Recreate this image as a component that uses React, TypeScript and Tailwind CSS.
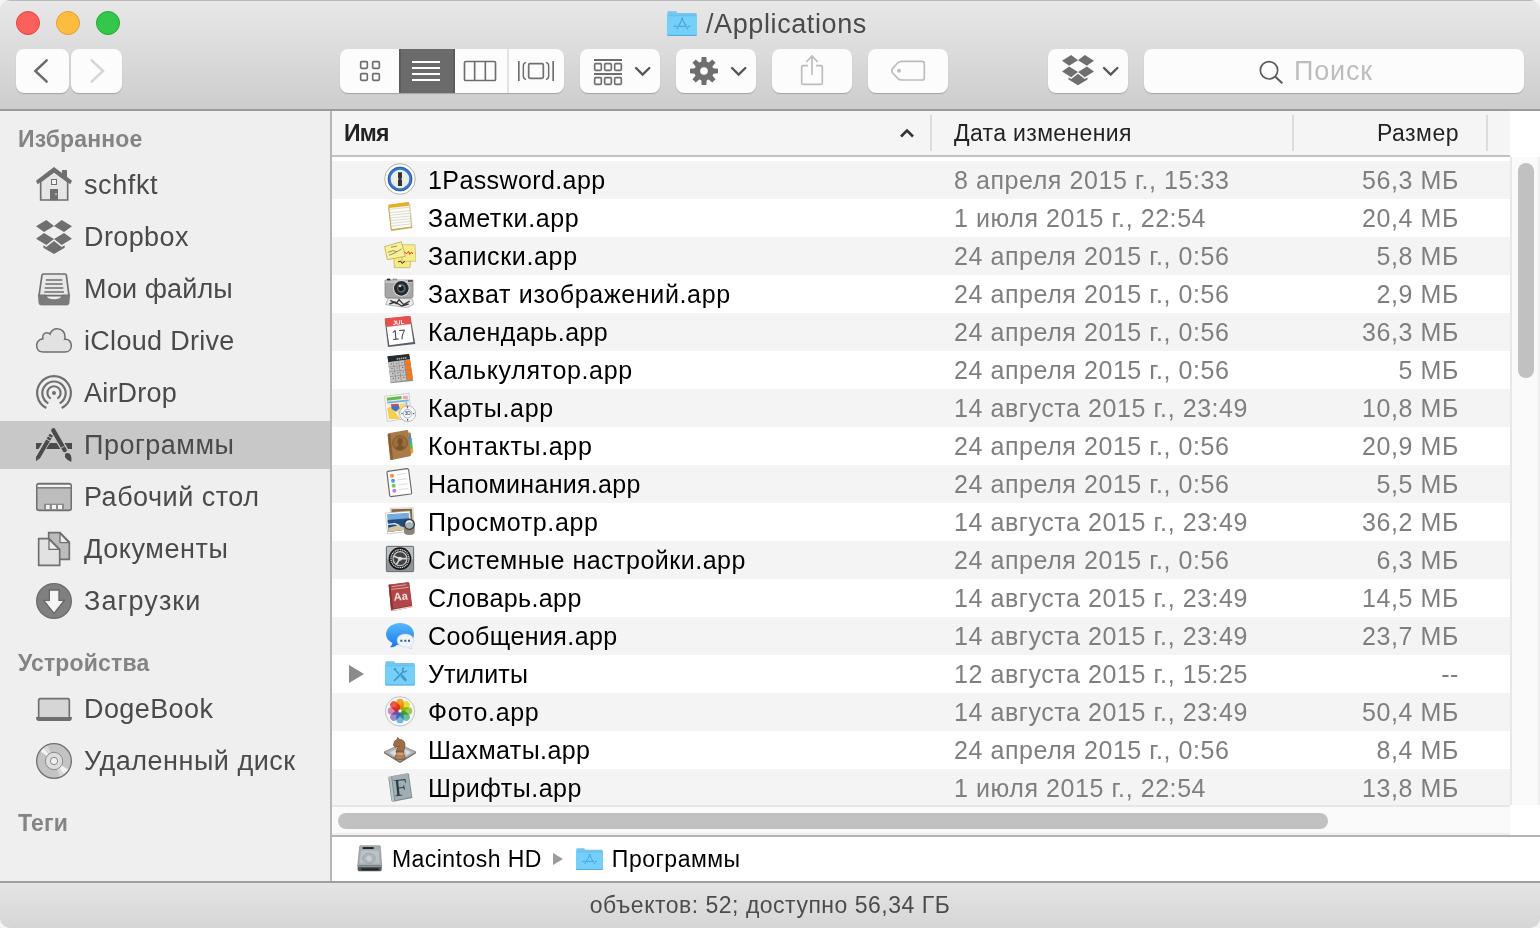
import type { ReactNode } from 'react';

function Art({ box, className, children }: { box: string; className: string; children: ReactNode }) {
  return (
    <svg viewBox={box} className={`block shrink-0 ${className}`} fill="none" preserveAspectRatio="none">
      {children}
    </svg>
  );
}

/* ---------- folder glyph shared by title, list and path bar ---------- */

function FolderShape() {
  return (
    <>
      <path d="M1 8 Q1 4 4 4 H26 Q28 4 29 6 L31 9 H86 Q89 9 89 12 V72 H1Z" fill="#74c6ee" />
      <path d="M0 17 H90 V73 Q90 76 87 76 H3 Q0 76 0 73Z" fill="#74d0f9" />
      <path d="M0 17 H90" stroke="#5bb9e8" strokeWidth="2" />
      <path d="M1 75 H89" stroke="#4fa9d8" strokeWidth="3" />
    </>
  );
}

function AppsFolder({ className }: { className: string }) {
  return (
    <Art box="0 0 90 80" className={className}>
      <FolderShape />
      <g stroke="#3f9fdc" strokeWidth="3">
        <path d="M48 24 L29 57" />
        <path d="M43 24 L63 57" />
        <path d="M20 48 H31 M37 48 H56 M63 48 H70" />
      </g>
    </Art>
  );
}

/* ---------- sidebar icons ---------- */

const G = '#6f6f6f';

const HouseIcon = () => (
  <Art box="108 36 108 108" className="size-9">
    <path d="M122 80 L162 50 L203 80 V135 H122Z" fill="#e6e6e6" stroke={G} strokeWidth="5" />
    <path d="M162 36 L186 54 V45 H201 V65 L216 77 L211 88 L162 52 L113 88 L108 77Z" fill={G} />
    <rect x="154.500" y="73.500" width="15" height="15" fill="#f4f4f4" stroke={G} strokeWidth="3" />
    <path d="M150 102 H174 V136 H150Z" fill={G} />
    <path d="M168 114 V121" stroke="#e6e6e6" strokeWidth="3" />
  </Art>
);

function BoxLogo() {
  return (
    <path
      fill={G}
      d="M139 195 L162 213 L132 231 L108 214Z M185 195 L216 214 L192 231 L162 213Z M132 234 L162 252 L139 270 L108 251Z M192 234 L216 251 L185 270 L162 252Z M162 258 L185 276 L194 271 V278 L162 297 L130 278 V271 L139 276Z"
    />
  );
}

const DropboxIcon = () => (
  <Art box="108 192 108 108" className="size-9">
    <BoxLogo />
  </Art>
);

const TrayIcon = () => (
  <Art box="108 348 108 108" className="size-9">
    <path d="M130 357 H195 Q198 357 199 360 L207 422 H117 L126 360 Q127 357 130 357Z" fill="#e8e8e8" stroke={G} strokeWidth="5" />
    <path d="M138 375 H187 M136 387 H188 M134 399 H190 M133 411 H192" stroke={G} strokeWidth="4.500" />
    <path d="M115 420 H137 Q141 434 162 434 Q183 434 187 420 H209 L207 445 Q206 450 201 450 H123 Q118 450 117 445Z" fill="#7b7b7b" stroke={G} strokeWidth="2" />
  </Art>
);

const CloudIcon = () => (
  <Art box="108 504 108 108" className="size-9">
    <path
      d="M130 591 C117 591 110 583 110 572 C110 560 118 553 129 551 C126 541 132 533 141 533 C145 533 148 534 150 537 C154 526 162 521 171 521 C186 521 196 532 195 547 C195 549 195 551 194 553 C206 551 214 561 214 572 C214 583 206 591 195 591Z"
      fill="#e2e2e2"
      stroke={G}
      strokeWidth="4.500"
    />
  </Art>
);

const AirDropIcon = () => (
  <Art box="108 660 108 108" className="size-9">
    <circle cx="162" cy="714" r="6" fill={G} />
    <g stroke={G} strokeWidth="6.500">
      <path d="M139 759 A50.500 50.500 0 1 1 185 759" />
      <path d="M145 745 A35 35 0 1 1 179 745" />
      <path d="M152 731 A20 20 0 1 1 172 731" />
    </g>
  </Art>
);

const ProgramsIcon = () => (
  <Art box="108 36 108 108" className="size-9">
    <path d="M108 84 H216 V102 H108Z" fill="#4a4a4a" />
    <path d="M157 52 L110 131 M160 48 L204 121" stroke="#c8c8c8" strokeWidth="20" />
    <path d="M154 59 L114 128" stroke="#4a4a4a" strokeWidth="12" />
    <path d="M108 124 L119 130 L108 139Z" fill="#4a4a4a" />
    <path d="M160 46 L194 105" stroke="#4a4a4a" strokeWidth="13" strokeLinecap="round" />
    <path d="M195 117 Q206 110 212 120 Q216 128 214 141 Q200 135 195 127Z" fill="#4a4a4a" />
    <path d="M142 62 L160 72 M137 71 L153 80" stroke="#c8c8c8" strokeWidth="3" />
    <path d="M182 100 L199 90" stroke="#c8c8c8" strokeWidth="2.500" />
  </Art>
);

const DesktopIcon = () => (
  <Art box="108 192 108 108" className="size-9">
    <rect x="110" y="206" width="104" height="80" rx="7" fill="#bdbdbd" stroke={G} strokeWidth="5" />
    <path d="M113 210 H211 V216 H113Z" fill="#f4f4f4" />
    <path d="M112 218.500 H212" stroke={G} strokeWidth="4" />
    <path d="M132 266 H192 V284 H132Z" fill="#8b8b8b" />
    <path d="M138 270 H149 V282 H138Z M156 270 H168 V282 H156Z M174 270 H186 V282 H174Z" fill="#f4f4f4" />
  </Art>
);

const DocumentsIcon = () => (
  <Art box="108 348 108 108" className="size-9">
    <path d="M146 353 H180 L208 381 V433 H146Z" fill="#bcbcbc" stroke={G} strokeWidth="5" />
    <path d="M180 355 V383 H207Z" fill="#ececec" stroke={G} strokeWidth="4" />
    <path d="M116 371 H147 L179 403 V451 H116Z" fill="#e2e2e2" stroke={G} strokeWidth="5" />
    <path d="M147 373 V403 H177Z" fill="#efefef" stroke={G} strokeWidth="4" />
  </Art>
);

const DownloadsIcon = () => (
  <Art box="108 504 108 108" className="size-9">
    <circle cx="162" cy="558" r="52" fill="#808080" stroke="#6c6c6c" strokeWidth="4" />
    <path d="M148 525 H177 V556 H193 L162 595 L131 556 H148Z" fill="#f5f5f5" stroke="#676767" strokeWidth="4" />
  </Art>
);

const LaptopIcon = () => (
  <Art box="108 153 108 108" className="size-9">
    <rect x="116" y="176" width="92" height="60" rx="5" fill="#d6d6d6" stroke={G} strokeWidth="5" />
    <path d="M108 231 H216 Q216 243 208 243 H116 Q108 243 108 231Z" fill={G} />
  </Art>
);

const DiscIcon = () => (
  <Art box="108 309 108 108" className="size-9">
    <circle cx="162" cy="363" r="52" fill="#c3c3c3" />
    <path d="M162 363 L120 333 L130 323Z M162 363 L206 389 L192 403Z" fill="#f3f3f3" />
    <path d="M162 363 L130 323 L143 315Z M162 363 L192 403 L180 411Z" fill="#d9d9d9" />
    <circle cx="162" cy="363" r="52" stroke={G} strokeWidth="4" />
    <circle cx="162" cy="363" r="26" fill="#dedede" stroke="#8a8a8a" strokeWidth="3" />
    <circle cx="162" cy="363" r="11" fill="#f0f0f0" stroke="#8a8a8a" strokeWidth="3" />
  </Art>
);

/* ---------- list icons ---------- */

const OnePassword = () => (
  <Art box="147 24 96 96" className="size-8">
    <circle cx="195" cy="72" r="46" fill="#fdfdfd" stroke="#a5a5a5" strokeWidth="2.500" />
    <circle cx="195" cy="72" r="32" fill="#ececec" stroke="#2f7ad8" strokeWidth="8" />
    <circle cx="195" cy="72" r="36" stroke="#12366b" strokeWidth="2" />
    <path d="M189 52 H201 V68 L199 72 L201 76 V93 H189 V76 L191 72 L189 68Z" fill="#333" />
  </Art>
);

const Notes = () => (
  <Art box="147 138 96 96" className="size-8">
    <path d="M162 153 L226 145 L233 220 L169 229Z" fill="#8f8f8f" opacity=".35" />
    <path d="M160 150 L221 141 L231 218 L168 227Z" fill="#d8b44e" />
    <path d="M162 156 L222 149 L228 215 L169 223Z" fill="#fcfcf6" />
    <path d="M160 149 L221 141 L223 152 L161 159Z" fill="#e6af24" />
    <path d="M164 163 L222 157" stroke="#9a9a8a" strokeWidth="2" strokeDasharray="3 3" />
    <path d="M165 173 L223 167 M166 181 L224 175 M167 189 L225 183 M168 197 L226 191 M168 205 L226 199 M169 213 L227 207" stroke="#c9c9c9" strokeWidth="2" />
    <path d="M161 158 L169 225 L231 216" stroke="#c9a94f" strokeWidth="3" />
  </Art>
);

const Stickies = () => (
  <Art box="147 252 96 96" className="size-8">
    <path d="M176 304 H228 L225 338 H178Z" fill="#f6ea81" stroke="#b5aa60" strokeWidth="2" />
    <path d="M196 269 H240 L243 319 H202Z" fill="#f7ec86" stroke="#bdb268" strokeWidth="2" />
    <path d="M149 275 L199 260 L211 304 L157 314Z" fill="#faf09a" stroke="#a89c4a" strokeWidth="2" />
    <path d="M168 277 L186 273 M159 292 L174 287 L186 290 L200 282 M162 301 L184 292" stroke="#63613c" strokeWidth="2" />
    <path d="M208 291 L215 296 L221 289 L224 298 L230 291 L233 297" stroke="#d33" strokeWidth="3" />
    <path d="M189 321 L197 318 L201 325 L210 319" stroke="#333" strokeWidth="3" />
  </Art>
);

const ImageCapture = () => (
  <Art box="147 366 96 96" className="size-8">
    <path d="M160 428 L232 432 L236 448 L217 458 L152 449Z" fill="#e9e9e9" stroke="#999" strokeWidth="2" />
    <path d="M166 436 L184 446 L192 434 L206 449 L224 438 M163 447 L180 441 L200 453 L221 447" stroke="#3a3a3a" strokeWidth="4" />
    <path d="M150 375 H174 V372 H185 V375 H234 V424 Q234 429 228 429 H158 Q150 429 150 423Z" fill="#a7a7a7" stroke="#777" strokeWidth="2" />
    <path d="M151 376 H233 V384 H151Z" fill="#c4c4c4" />
    <rect x="156" y="371" width="10" height="5" fill="#222" />
    <rect x="219" y="375" width="14" height="6" fill="#555" />
    <circle cx="199" cy="400" r="25" fill="#d8d8d8" />
    <circle cx="199" cy="400" r="22" fill="#292929" />
    <circle cx="199" cy="400" r="13" fill="#53606f" />
    <circle cx="198" cy="400" r="8" fill="#151c28" />
    <circle cx="195" cy="393" r="4" fill="#c5d2e4" />
  </Art>
);

const CalendarIcon = () => (
  <Art box="147 480 96 96" className="size-8">
    <path d="M149 491 L226 483 L241 567 L159 576Z" fill="#5a6068" />
    <path d="M152 494 L224 485 L235 561 L163 571Z" fill="#fff" />
    <path d="M150 492 Q150 490 153 490 L222 483 Q225 483 226 486 L229 507 L153 516Z" fill="#e8504e" />
    <text x="174" y="510" transform="rotate(-6 174 510)" fontSize="18" fontWeight="700" fill="#fff" fontFamily="Liberation Sans, sans-serif">JUL</text>
    <text x="172" y="555" transform="rotate(-5 172 555)" fontSize="41" textLength="42" lengthAdjust="spacingAndGlyphs" fill="#444" fontFamily="Liberation Sans, sans-serif">17</text>
  </Art>
);

const CalculatorIcon = () => (
  <Art box="147 24 96 96" className="size-8">
    <path d="M158 35 L223 27 L234 108 L167 115Z" fill="#8f8f8f" />
    <path d="M157 34 L222 27 L225 42 L160 52Z" fill="#252b30" />
    <path d="M185 42 L216 38" stroke="#a9b8ba" strokeWidth="5" strokeDasharray="4 2" />
    <path d="M160 52 L207 46 L215 106 L167 112Z" fill="#c6c6c6" />
    <path d="M208 46 L225 43 L234 102 L216 105Z" fill="#f4791f" />
    <path d="M161 66 L228 58 M163 80 L230 73 M165 95 L232 87 M175 50 L183 110 M191 48 L199 108 M207 46 L216 106" stroke="#8a837e" strokeWidth="2" />
    <path d="M167 57 L205 53 M169 71 L207 67 M171 86 L209 81 M173 101 L211 97" stroke="#666" strokeWidth="3" strokeDasharray="4 12" />
  </Art>
);

const MapsIcon = () => (
  <Art box="147 138 96 96" className="size-8">
    <path d="M149 154 L222 145 L229 219 L157 229Z" fill="#fbfbfb" stroke="#b9b9b9" strokeWidth="2" />
    <path d="M155 158 L220 150 L226 214 L161 223Z" fill="#f2efe2" />
    <path d="M155 158 L199 153 L200 162 L156 167Z" fill="#62bb46" />
    <path d="M204 153 L218 152 L219 162 L204 162Z" fill="#f0a3b1" />
    <path d="M156 173 L221 166" stroke="#6db2ec" strokeWidth="5" />
    <path d="M213 167 L216 195" stroke="#8cc6f1" strokeWidth="6" />
    <path d="M157 189 L168 185 L196 222 H162Z" fill="#f7cf4c" />
    <path d="M196 176 L212 173 V196 L198 214 L187 201Z" fill="#f7dd78" />
    <path d="M168 179 L190 177 L194 190 L183 200 L170 192Z" fill="#3c76c8" />
    <path d="M167 178 L190 176 L191 182 L169 184Z" fill="#dd4a4a" />
    <circle cx="218" cy="206" r="24" fill="#fafafa" stroke="#9b9b9b" strokeWidth="2" />
    <circle cx="218" cy="206" r="13" stroke="#7fb4cf" strokeWidth="2.500" />
    <text x="209" y="211" fontSize="14" fill="#333" fontFamily="Liberation Sans, sans-serif">3D</text>
    <path d="M214 184 H221 L217.500 191Z" fill="#e22" />
    <path d="M199 206 H203 M234 206 H238 M218 222 V227" stroke="#234" strokeWidth="3" />
  </Art>
);

const ContactsIcon = () => (
  <Art box="147 252 96 96" className="size-8">
    <path d="M220 262 L227 264 L229 282 L221 284Z" fill="#77808a" />
    <path d="M220 281 L230 279 L232 296 L222 300Z" fill="#40a6dc" />
    <path d="M222 297 L232 295 L234 311 L224 315Z" fill="#61bd56" />
    <path d="M224 313 L234 309 L235 322 L226 330Z" fill="#ee9a35" />
    <path d="M158 269 Q157 266 161 265 L215 255 Q219 255 220 259 L228 330 Q228 333 225 334 L170 345 Q166 345 165 341Z" fill="#a97b48" />
    <path d="M158 269 L166 266 L174 343 L167 345Z" fill="#8a5e2e" />
    <circle cx="195" cy="294" r="22" fill="#9c6f3b" stroke="#79542a" strokeWidth="2.500" />
    <path d="M195 279 Q204 279 203 290 Q202 297 199 299 Q200 304 210 306 Q204 315 195 315 Q184 314 180 308 Q191 305 191 299 Q187 295 187 289 Q187 280 195 279Z" fill="#79542a" />
  </Art>
);

const RemindersIcon = () => (
  <Art box="147 366 96 96" className="size-8">
    <path d="M158 379 L216 371 Q220 371 221 375 L230 443 Q230 446 227 447 L168 455 Q165 455 164 451 L156 383 Q156 380 158 379Z" fill="#fdfdfd" stroke="#6a6a6a" strokeWidth="3.500" />
    <path d="M186 389 L214 385 M187 405 L216 401 M190 420 L218 416 M192 434 L220 430" stroke="#ccc" strokeWidth="2" />
    <circle cx="171" cy="392" r="6" fill="#f8893d" />
    <circle cx="174" cy="407" r="6" fill="#3e9eea" />
    <circle cx="176" cy="422" r="6" fill="#68cf57" />
    <circle cx="178" cy="437" r="6" fill="#c77be3" />
  </Art>
);

const PreviewIcon = () => (
  <Art box="147 480 96 96" className="size-8">
    <path d="M165 490 L234 488 L237 550 H168Z" fill="#fafafa" stroke="#bbb" strokeWidth="2" />
    <path d="M169 493 L231 491 L233 530 H170Z" fill="#866637" />
    <path d="M151 504 L224 498 L230 558 L158 567Z" fill="#fff" stroke="#b7b7b7" strokeWidth="2" />
    <path d="M156 508 L221 503 L226 552 L161 561Z" fill="#73abe1" />
    <path d="M158 525 L223 520 L226 552 L161 561Z" fill="#204c80" />
    <path d="M160 548 L190 541 L210 548 L226 540 V552 L161 561Z" fill="#d8c39d" />
    <path d="M159 538 L180 536 L193 542" stroke="#e6eef4" strokeWidth="4" />
    <path d="M207 538 H239 V561 Q239 570 223 570 Q207 570 207 561Z" fill="#8b847b" />
    <circle cx="223" cy="538" r="15" fill="#a9b3bc" stroke="#3a3633" strokeWidth="4" />
    <path d="M214 534 Q221 525 231 532" stroke="#eef" strokeWidth="4" />
  </Art>
);

const SettingsIcon = () => (
  <Art box="147 24 96 96" className="size-8">
    <rect x="153" y="33" width="84" height="78" rx="4" fill="#8d959a" />
    <rect x="155" y="35" width="80" height="38" fill="#b7c1c6" />
    <rect x="154" y="34" width="82" height="76" rx="4" stroke="#6b7175" strokeWidth="3" />
    <circle cx="195" cy="71" r="34" fill="#151515" />
    <circle cx="195" cy="71" r="27" stroke="#e0e0e0" strokeWidth="4" strokeDasharray="3.500 2" />
    <circle cx="195" cy="71" r="21" fill="#424242" stroke="#c4c4c4" strokeWidth="4" />
    <path d="M195 71 L176 63 M195 71 H216 M195 71 L184 89" stroke="#d4d4d4" strokeWidth="5" />
    <circle cx="195" cy="71" r="6" fill="#ddd" />
  </Art>
);

const DictionaryIcon = () => (
  <Art box="147 138 96 96" className="size-8">
    <path d="M161 149 L219 142 Q222 142 223 145 L232 216 L173 228 Q169 228 168 224Z" fill="#9c3336" />
    <path d="M171 224 L231 213 L231 217 L173 228Z" fill="#e6ddd5" />
    <path d="M161 149 L221 142 L230 211 L168 222Z" fill="#b0484b" />
    <path d="M161 150 L166 149 L175 222 L169 224Z" fill="#8b2f33" />
    <path d="M170 155 L214 149 M169 163 L221 157" stroke="#d9a3a3" strokeWidth="3" />
    <text x="177" y="197" transform="rotate(-5 177 197)" fontSize="33" textLength="42" lengthAdjust="spacingAndGlyphs" fill="#f6e4e2" fontWeight="700" fontFamily="Liberation Sans, sans-serif">Aa</text>
  </Art>
);

const MessagesIcon = () => (
  <Art box="147 252 96 96" className="size-8">
    <defs>
      <linearGradient id="bubble" x1="0" y1="0" x2="0" y2="1">
        <stop offset="0" stopColor="#58b9fb" />
        <stop offset="1" stopColor="#1a79ee" />
      </linearGradient>
    </defs>
    <path d="M195 264 C220 264 237 279 237 298 C237 317 219 330 195 330 L186 329 Q179 337 165 337 Q172 331 172 324 C160 318 153 309 153 298 C153 279 171 264 195 264Z" fill="url(#bubble)" />
    <path d="M211 297 C226 297 236 305 236 317 C236 324 232 329 227 332 Q227 337 231 341 Q222 341 217 336 C199 338 186 329 186 316 C186 305 197 297 211 297Z" fill="#eff5fb" stroke="#a8c5df" strokeWidth="1.500" />
    <path d="M196 317 H202 M208 317 H214 M219 317 H225" stroke="#34597f" strokeWidth="6" />
  </Art>
);

const UtilitiesIcon = () => (
  <Art box="147 366 96 96" className="size-8">
    <g transform="translate(150 375)">
      <FolderShape />
    </g>
    <g stroke="#3c97ca" strokeWidth="4">
      <path d="M180 404 L192 417 M198 423 L211 436" />
      <path d="M177 438 L205 409" strokeWidth="5" />
      <path d="M207 398 Q200 403 204 409 Q210 414 215 406" />
    </g>
    <path d="M175 401 L180 398 L185 403 L180 408Z M197 423 L202 418 L216 434 L211 440Z" fill="#3c97ca" />
  </Art>
);

const petals = [
  { a: 0, c: '#fba32c' },
  { a: 45, c: '#ece437' },
  { a: 90, c: '#a5d054' },
  { a: 135, c: '#6cc7a0' },
  { a: 180, c: '#79b8ea' },
  { a: 225, c: '#9c8fd4' },
  { a: 270, c: '#e08abf' },
  { a: 315, c: '#f25a45' },
];

const PhotosIcon = () => (
  <Art box="147 480 96 96" className="size-8">
    <circle cx="195" cy="529" r="44" fill="#f8f8f8" stroke="#b5b5b5" strokeWidth="2.500" />
    {petals.map((p) => (
      <rect key={p.a} x="184" y="491" width="22" height="33" rx="11" fill={p.c} className="mix-blend-multiply" transform={`rotate(${p.a} 195 528)`} />
    ))}
  </Art>
);

const ChessIcon = () => (
  <Art box="147 129 96 96" className="size-8">
    <path d="M147 186 L195 164 L243 186 L195 215Z" fill="#b5b5b5" stroke="#6c6c6c" strokeWidth="2" />
    <path d="M147 187 L195 215 L243 187 V190 L195 219 L147 190Z" fill="#5f5f5f" />
    <path d="M164 187 L195 174 V200 L180 199Z M210 178 L228 187 L212 197Z" fill="#dcdcdc" />
    <path d="M188 142 L192 148 Q211 149 210 167 Q209 177 203 186 H183 Q184 177 193 168 L181 172 L175 166 L179 153 L186 149Z" fill="#9d6d45" stroke="#6b4525" strokeWidth="2" />
    <path d="M185 184 H205 L206 193 L211 202 Q211 209 195 209 Q179 209 179 202 L184 193Z" fill="#b27d52" stroke="#6b4525" strokeWidth="2" />
    <path d="M184 192 H206" stroke="#e3bd93" strokeWidth="3" />
  </Art>
);

const FontsIcon = () => (
  <Art box="147 243 96 96" className="size-8">
    <path d="M162 260 L218 250 Q221 250 222 253 L232 324 L174 335 Q170 335 169 331 L160 263Z" fill="#7e8b91" />
    <path d="M162 259 L168 258 L178 332 L171 334Z" fill="#b9c5ca" />
    <path d="M171 258 L219 250 L229 321 L180 331Z" fill="#a0afb5" />
    <text x="179" y="319" transform="rotate(-6 179 319)" fontSize="74" textLength="40" lengthAdjust="spacingAndGlyphs" fill="#2f383d" fontFamily="Liberation Serif, serif">F</text>
  </Art>
);

/* ---------- data ---------- */

type Row = { name: string; date: string; size: string; icon: ReactNode; folder?: boolean; track?: string };

const rows: Row[] = [
  { name: '1Password.app', date: '8 апреля 2015 г., 15:33', size: '56,3 МБ', icon: <OnePassword />, track: 'tracking-[0.4px]' },
  { name: 'Заметки.app', date: '1 июля 2015 г., 22:54', size: '20,4 МБ', icon: <Notes /> },
  { name: 'Записки.app', date: '24 апреля 2015 г., 0:56', size: '5,8 МБ', icon: <Stickies /> },
  { name: 'Захват изображений.app', date: '24 апреля 2015 г., 0:56', size: '2,9 МБ', icon: <ImageCapture /> },
  { name: 'Календарь.app', date: '24 апреля 2015 г., 0:56', size: '36,3 МБ', icon: <CalendarIcon />, track: 'tracking-[0.4px]' },
  { name: 'Калькулятор.app', date: '24 апреля 2015 г., 0:56', size: '5 МБ', icon: <CalculatorIcon /> },
  { name: 'Карты.app', date: '14 августа 2015 г., 23:49', size: '10,8 МБ', icon: <MapsIcon /> },
  { name: 'Контакты.app', date: '24 апреля 2015 г., 0:56', size: '20,9 МБ', icon: <ContactsIcon /> },
  { name: 'Напоминания.app', date: '24 апреля 2015 г., 0:56', size: '5,5 МБ', icon: <RemindersIcon />, track: 'tracking-[0.3px]' },
  { name: 'Просмотр.app', date: '14 августа 2015 г., 23:49', size: '36,2 МБ', icon: <PreviewIcon /> },
  { name: 'Системные настройки.app', date: '24 апреля 2015 г., 0:56', size: '6,3 МБ', icon: <SettingsIcon />, track: 'tracking-[0.5px]' },
  { name: 'Словарь.app', date: '14 августа 2015 г., 23:49', size: '14,5 МБ', icon: <DictionaryIcon />, track: 'tracking-[0.4px]' },
  { name: 'Сообщения.app', date: '14 августа 2015 г., 23:49', size: '23,7 МБ', icon: <MessagesIcon />, track: 'tracking-[0.4px]' },
  { name: 'Утилиты', date: '12 августа 2015 г., 15:25', size: '--', icon: <UtilitiesIcon />, folder: true, track: 'tracking-[0.1px]' },
  { name: 'Фото.app', date: '14 августа 2015 г., 23:49', size: '50,4 МБ', icon: <PhotosIcon /> },
  { name: 'Шахматы.app', date: '24 апреля 2015 г., 0:56', size: '8,4 МБ', icon: <ChessIcon />, track: 'tracking-[0.4px]' },
  { name: 'Шрифты.app', date: '1 июля 2015 г., 22:54', size: '13,8 МБ', icon: <FontsIcon />, track: 'tracking-[0.5px]' },
];

type Place = { label: string; icon: ReactNode; track: string; active?: boolean };

const favourites: Place[] = [
  { label: 'schfkt', icon: <HouseIcon />, track: 'tracking-[0.6px]' },
  { label: 'Dropbox', icon: <DropboxIcon />, track: 'tracking-[0.4px]' },
  { label: 'Мои файлы', icon: <TrayIcon />, track: 'tracking-[0.1px]' },
  { label: 'iCloud Drive', icon: <CloudIcon />, track: 'tracking-[0.3px]' },
  { label: 'AirDrop', icon: <AirDropIcon />, track: 'tracking-[0.2px]' },
  { label: 'Программы', icon: <ProgramsIcon />, active: true, track: 'tracking-[0.5px]' },
  { label: 'Рабочий стол', icon: <DesktopIcon />, track: 'tracking-[0.5px]' },
  { label: 'Документы', icon: <DocumentsIcon />, track: 'tracking-[0.6px]' },
  { label: 'Загрузки', icon: <DownloadsIcon />, track: 'tracking-[1.1px]' },
];

const devices: Place[] = [
  { label: 'DogeBook', icon: <LaptopIcon />, track: 'tracking-[0.4px]' },
  { label: 'Удаленный диск', icon: <DiscIcon />, track: 'tracking-[0.5px]' },
];

/* ---------- toolbar ---------- */

const btn = 'h-11 shrink-0 overflow-hidden rounded-lg bg-[#fcfcfc] shadow-[0_1px_1px_rgba(0,0,0,0.22)]';

const Chevron = ({ x }: { x: number }) => (
  <path d={`M${x - 20} 204 L${x} 224 L${x + 20} 204`} stroke="#555" strokeWidth="7" strokeLinecap="round" />
);

function Toolbar() {
  return (
    <div className="flex h-11 pl-4">
      <button className={`${btn} w-[53px]`}>
        <Art box="48 147 159 132" className="h-11 w-[53px]">
          <path d="M140 181 L106 213 L140 245" stroke="#6b6b6b" strokeWidth="7.500" strokeLinecap="round" />
        </Art>
      </button>
      <button className={`${btn} ml-0.5 w-[51px]`}>
        <Art box="213 147 153 132" className="h-11 w-[51px]">
          <path d="M275 181 L309 213 L275 245" stroke="#d5d5d5" strokeWidth="7.500" strokeLinecap="round" />
        </Art>
      </button>

      <div className={`${btn} ml-[218px] flex w-56`}>
        <Art box="30 147 177 132" className="h-11 w-[59px]">
          <g stroke="#6e6e6e" strokeWidth="5">
            <rect x="92" y="185" width="20" height="20" rx="3" />
            <rect x="128" y="185" width="20" height="20" rx="3" />
            <rect x="92" y="221" width="20" height="20" rx="3" />
            <rect x="128" y="221" width="20" height="20" rx="3" />
          </g>
        </Art>
        <div className="w-14 border-x-2 border-[#5c5c5c] bg-[#6b6b6b]">
          <Art box="213 147 156 132" className="h-11 w-[52px]">
            <path d="M246 186 H330 M246 204 H330 M246 222 H330 M246 240 H330" stroke="#fff" strokeWidth="6" />
          </Art>
        </div>
        <div className="border-r-2 border-[#e4e4e4]">
          <Art box="375 147 156 132" className="h-11 w-[52px]">
            <rect x="403.500" y="184.500" width="93" height="57" rx="4" stroke="#6e6e6e" strokeWidth="5" />
            <path d="M434 184 V242 M466 184 V242" stroke="#6e6e6e" strokeWidth="5" />
          </Art>
        </div>
        <Art box="537 147 165 132" className="h-11 w-[55px]">
          <g stroke="#6e6e6e" strokeWidth="5">
            <rect x="596" y="191" width="44" height="44" rx="4" />
            <path d="M566.500 183 V243 M669.500 183 V243" />
            <path d="M588 187 Q580 190 580 197 V229 Q580 236 588 239 M648 187 Q656 190 656 197 V229 Q656 236 648 239" strokeWidth="4.500" />
          </g>
        </Art>
      </div>

      <button className={`${btn} ml-4 w-20`}>
        <Art box="750 147 240 132" className="h-11 w-20">
          <path d="M792 180 H876 M792 222 H876" stroke="#6e6e6e" strokeWidth="6" />
          <g stroke="#6e6e6e" strokeWidth="5">
            <rect x="794" y="191" width="20" height="20" rx="3" />
            <rect x="824" y="191" width="20" height="20" rx="3" />
            <rect x="854" y="191" width="20" height="20" rx="3" />
            <rect x="794" y="233" width="20" height="20" rx="3" />
            <rect x="824" y="233" width="20" height="20" rx="3" />
            <rect x="854" y="233" width="20" height="20" rx="3" />
          </g>
          <Chevron x={938} />
        </Art>
      </button>

      <button className={`${btn} ml-4 w-20`}>
        <Art box="48 147 240 132" className="h-11 w-20">
          {[0, 45, 90, 135].map((a) => (
            <path key={a} d="M125 171 H139 L140 185 V241 L139 255 H125 L124 241 V185Z" fill="#6e6e6e" transform={`rotate(${a} 132 213)`} />
          ))}
          <circle cx="132" cy="213" r="29" fill="#6e6e6e" />
          <circle cx="132" cy="213" r="11.500" fill="#fcfcfc" />
          <Chevron x={236} />
        </Art>
      </button>

      <button className={`${btn} ml-4 w-20`}>
        <Art box="336 147 240 132" className="h-11 w-20">
          <path d="M444 197 H430 Q425 197 425 202 V248 Q425 253 430 253 H482 Q487 253 487 248 V202 Q487 197 482 197 H468 M456 225 V169 M439 186 L456 168 L473 186" stroke="#bcbcbc" strokeWidth="5" />
        </Art>
      </button>

      <button className={`${btn} ml-4 w-20`}>
        <Art box="624 147 240 132" className="h-11 w-20">
          <path d="M726 184 H786 Q793 184 793 191 V233 Q793 240 786 240 H726 Q718 240 713 235 L698 219 Q693 212 698 205 L713 189 Q718 184 726 184Z" stroke="#bcbcbc" strokeWidth="5" />
          <circle cx="717" cy="212" r="6" fill="#bcbcbc" />
        </Art>
      </button>

      <button className={`${btn} ml-[100px] w-20`}>
        <Art box="54 147 240 132" className="h-11 w-20">
          <g transform="translate(96 165) scale(.889) translate(-108 -195)">
            <BoxLogo />
          </g>
          <Chevron x={242} />
        </Art>
      </button>

      <div className={`${btn} ml-4 flex w-[380px] items-center`}>
        <Art box="342 147 450 132" className="h-11 w-[150px]">
          <circle cx="717" cy="211" r="26" stroke="#5a5a5a" strokeWidth="5" />
          <path d="M736 230 L757 250" stroke="#5a5a5a" strokeWidth="6" />
        </Art>
        <span className="text-[27px] tracking-[0.8px] text-[#bdbdbd]">Поиск</span>
      </div>
    </div>
  );
}

/* ---------- sidebar ---------- */

function SidebarItem({ label, icon, active, track }: Place) {
  return (
    <li className="py-0.5">
      <div className={`flex h-12 items-center gap-3 pl-9 ${active ? 'bg-[#c8c8c8]' : ''}`}>
        {icon}
        <span className={`whitespace-nowrap text-[27px] leading-8 text-[#4a4a4a] ${track}`}>{label}</span>
      </div>
    </li>
  );
}

function Sidebar() {
  const heading = 'pl-[18px] text-[23px] font-bold leading-7 tracking-[0.15px] text-[#848484]';
  return (
    <aside className="w-[332px] shrink-0 border-r-2 border-[#b5b5b5] bg-[#efefef]">
      <h2 className={`${heading} h-12 pt-3.5`}>Избранное</h2>
      <ul>
        {favourites.map((f) => (
          <SidebarItem key={f.label} {...f} />
        ))}
      </ul>
      <h2 className={`${heading} h-14 pt-[22px]`}>Устройства</h2>
      <ul>
        {devices.map((d) => (
          <SidebarItem key={d.label} {...d} />
        ))}
      </ul>
      <h2 className={`${heading} pt-[22px]`}>Теги</h2>
    </aside>
  );
}

/* ---------- file list ---------- */

function FileRow({ row, shaded }: { row: Row; shaded: boolean }) {
  return (
    <div className={`flex h-[38px] shrink-0 items-center whitespace-nowrap text-[25px] leading-[38px] ${shaded ? 'bg-[#f4f4f4]' : 'bg-white'}`}>
      <div className="flex w-[52px] items-center pl-[17px]">
        {row.folder && (
          <Art box="0 0 15 18" className="h-[18px] w-[15px]">
            <path d="M0 0 L15 9 L0 18Z" fill="#8b8b8b" />
          </Art>
        )}
      </div>
      <div className="-mt-0.5">{row.icon}</div>
      <span className={`w-[526px] pl-3 text-black ${row.track ?? 'tracking-[0.65px]'}`}>{row.name}</span>
      <span className="w-[340px] pl-3 tracking-[0.57px] text-[#7f7f7f]">{row.date}</span>
      <span className="w-[177px] text-right tracking-[0.6px] text-[#7f7f7f]">{row.size}</span>
    </div>
  );
}

function ColumnHeader() {
  return (
    <div className="flex h-[46px] w-[1178px] border-b-2 border-[#c2c2c2] bg-[#f5f5f5] py-1 text-[23px] leading-9 text-[#222]">
      <div className="flex w-[600px] items-center justify-between border-r-2 border-[#dcdcdc] pl-3 pr-[15px]">
        <span className="font-bold tracking-[-0.8px]">Имя</span>
        <Art box="0 0 16 10" className="h-2.5 w-4">
          <path d="M2 8.500 L8 2.500 L14 8.500" stroke="#333" strokeWidth="2.600" />
        </Art>
      </div>
      <div className="w-[362px] border-r-2 border-[#dcdcdc] pl-[22px] tracking-[0.35px]">Дата изменения</div>
      <div className="w-[194px] border-r-2 border-[#dcdcdc] pr-[27px] text-right tracking-[0.5px]">Размер</div>
    </div>
  );
}

function FileList() {
  return (
    <main className="flex w-[1208px] flex-col bg-white">
      <ColumnHeader />
      <div className="flex h-[648px]">
        <div className="flex h-full w-[1178px] flex-col overflow-hidden pt-1">
          {rows.map((r, i) => (
            <FileRow key={r.name} row={r} shaded={i % 2 === 0} />
          ))}
        </div>
        <div className="w-[30px] border-x-2 border-l-[#e8e8e8] border-r-[#eeeeee] bg-[#fafafa] pl-1.5 pt-1.5">
          <div className="h-[215px] w-4 rounded-full bg-[#c1c1c1]" />
        </div>
      </div>
      <div className="h-[30px] w-[1178px] border-b-2 border-t-2 border-b-[#eeeeee] border-t-[#e6e6e6] bg-[#fafafa] pl-1.5 pt-1.5">
        <div className="h-4 w-[990px] rounded-full bg-[#c1c1c1]" />
      </div>
      <nav className="flex h-[46px] items-center border-t-2 border-[#b3b3b3] pl-[25px] text-[23px] leading-8 text-black">
        <Art box="67 462 78 80" className="-mt-0.5 h-[27px] w-[26px]">
          <path d="M75 466 Q75 464 77 464 H134 Q136 464 137 466 L141 524 H69Z" fill="#a3acb0" stroke="#8b9294" strokeWidth="2" />
          <path d="M69 523 H141 V534 Q141 540 137 540 H73 Q69 540 69 534Z" fill="#50565a" />
          <path d="M70 525 H140" stroke="#8f989c" strokeWidth="4" />
          <path d="M84 471 H117" stroke="#111" strokeWidth="5" />
          <path d="M79 478 H132 L135 517 H75Z" fill="#bac2c5" />
          <ellipse cx="103" cy="502" rx="19" ry="15" fill="#adb6b9" stroke="#949da0" strokeWidth="2" />
          <circle cx="103" cy="502" r="8" fill="#c8cfd2" />
          <path d="M80 534 H132" stroke="#1d2022" strokeWidth="5" />
        </Art>
        <span className="pl-[9px] tracking-[0.45px]">Macintosh HD</span>
        <Art box="0 0 10 12" className="ml-[11px] h-3 w-2.5">
          <path d="M0 0 L10 6 L0 12Z" fill="#9b9b9b" />
        </Art>
        <AppsFolder className="ml-[13px] h-6 w-[27px]" />
        <span className="pl-[9px] tracking-[0.5px]">Программы</span>
      </nav>
    </main>
  );
}

export default function App() {
  return (
    <div className="h-[928px] w-[1540px] bg-[#f4f4f4] font-['Liberation_Sans',Arial,sans-serif]">
      <div className="flex h-full flex-col overflow-hidden rounded-[10px]">
        <header className="h-[111px] shrink-0 border-b-2 border-t border-b-[#9b9b9b] border-t-[#b9b9b9] bg-linear-to-b from-[#e8e8e8] to-[#cdcdcd]">
          <div className="flex h-12">
            <div className="flex w-[667px] gap-4 pl-4 pt-2.5">
              <span className="size-6 rounded-full border border-[#e2423f] bg-[#fc605c]" />
              <span className="size-6 rounded-full border border-[#dfa033] bg-[#fdbc40]" />
              <span className="size-6 rounded-full border border-[#22a535] bg-[#34c84a]" />
            </div>
            <AppsFolder className="mt-[9px] h-[27px] w-[30px]" />
            <h1 className="pl-[9px] text-[27px] leading-[46px] tracking-[0.6px] text-[#4a4a4a]">/Applications</h1>
          </div>
          <Toolbar />
        </header>
        <div className="flex h-[770px] shrink-0">
          <Sidebar />
          <FileList />
        </div>
        <footer className="flex h-[47px] shrink-0 justify-center border-t-2 border-[#9f9f9f] bg-linear-to-b from-[#e4e4e4] to-[#d6d6d6] text-[23px] leading-[45px] tracking-[0.5px] text-[#4c4c4c]">
          объектов: 52; доступно 56,34 ГБ
        </footer>
      </div>
    </div>
  );
}
